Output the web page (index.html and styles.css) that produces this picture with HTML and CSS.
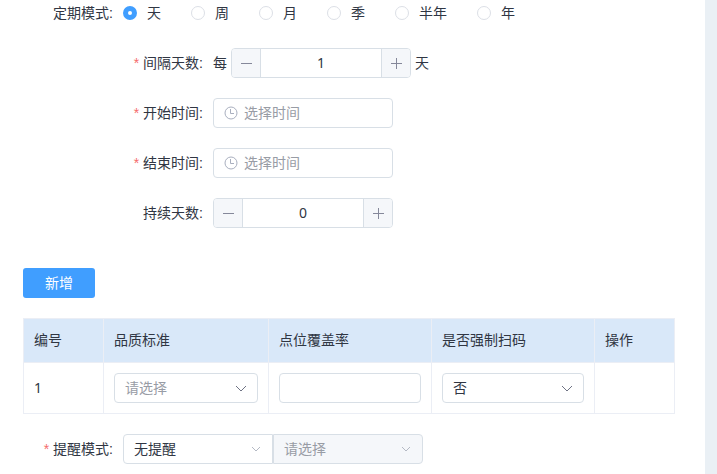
FILE: index.html
```html
<!DOCTYPE html>
<html lang="zh-CN">
<head>
<meta charset="utf-8">
<meta name="viewport" content="width=device-width, initial-scale=1">
<title>定期模式</title>
<link rel="stylesheet" href="styles.css">
</head>
<body>
<form class="panel">
  <div class="row row-mode" role="radiogroup" aria-labelledby="mode-label">
    <span class="label" id="mode-label">定期模式:</span>
    <div class="radios">
      <label class="radio"><input type="radio" name="mode" checked>天</label>
      <label class="radio"><input type="radio" name="mode">周</label>
      <label class="radio"><input type="radio" name="mode">月</label>
      <label class="radio"><input type="radio" name="mode">季</label>
      <label class="radio"><input type="radio" name="mode">半年</label>
      <label class="radio"><input type="radio" name="mode">年</label>
    </div>
  </div>
  <div class="row">
    <label class="label label-wide required" for="interval">间隔天数:</label>
    <div class="field">
      <span>每</span>
      <div class="stepper">
        <button type="button" aria-label="减少"><svg viewBox="0 0 12 12"><path d="M1 6.5H12"/></svg></button>
        <input id="interval" type="text" inputmode="numeric" value="1">
        <button type="button" aria-label="增加"><svg viewBox="0 0 12 12"><path d="M1 6.5H12M6.5 1V12"/></svg></button>
      </div>
      <span>天</span>
    </div>
  </div>
  <div class="row">
    <label class="label label-wide required" for="start">开始时间:</label>
    <div class="time">
      <svg class="clock" viewBox="0 0 14 14"><circle cx="7" cy="7" r="6"/><path d="M6.5 3V7.5H10"/></svg>
      <input id="start" class="control" type="text" placeholder="选择时间">
    </div>
  </div>
  <div class="row">
    <label class="label label-wide required" for="end">结束时间:</label>
    <div class="time">
      <svg class="clock" viewBox="0 0 14 14"><circle cx="7" cy="7" r="6"/><path d="M6.5 3V7.5H10"/></svg>
      <input id="end" class="control" type="text" placeholder="选择时间">
    </div>
  </div>
  <div class="row">
    <label class="label label-wide" for="duration">持续天数:</label>
    <div class="stepper">
      <button type="button" aria-label="减少"><svg viewBox="0 0 12 12"><path d="M1 6.5H12"/></svg></button>
      <input id="duration" type="text" inputmode="numeric" value="0">
      <button type="button" aria-label="增加"><svg viewBox="0 0 12 12"><path d="M1 6.5H12M6.5 1V12"/></svg></button>
    </div>
  </div>

  <button type="button" class="add">新增</button>

  <table class="grid">
    <colgroup><col class="col-small"><col class="col-standard"><col><col><col class="col-small"></colgroup>
    <thead>
      <tr><th>编号</th><th>品质标准</th><th>点位覆盖率</th><th>是否强制扫码</th><th>操作</th></tr>
    </thead>
    <tbody>
      <tr>
        <td>1</td>
        <td>
          <div class="select">
            <select class="control placeholder" aria-label="品质标准"><option>请选择</option></select>
            <svg class="chevron" viewBox="0 0 12 8"><path d="M1 1L6 6L11 1"/></svg>
          </div>
        </td>
        <td><input class="control" type="text" aria-label="点位覆盖率"></td>
        <td>
          <div class="select">
            <select class="control" aria-label="是否强制扫码"><option>否</option><option>是</option></select>
            <svg class="chevron" viewBox="0 0 12 8"><path d="M1 1L6 6L11 1"/></svg>
          </div>
        </td>
        <td></td>
      </tr>
    </tbody>
  </table>

  <div class="row">
    <label class="label required" for="remind">提醒模式:</label>
    <div class="pair">
      <div class="select light">
        <select id="remind" class="control"><option>无提醒</option></select>
        <svg class="chevron" viewBox="0 0 12 8"><path d="M2 1L6 5L10 1"/></svg>
      </div>
      <div class="select light">
        <select class="control placeholder" aria-label="提醒方式" disabled><option>请选择</option></select>
        <svg class="chevron" viewBox="0 0 12 8"><path d="M2 1L6 5L10 1"/></svg>
      </div>
    </div>
  </div>
</form>
</body>
</html>
```

FILE: styles.css
```css
* {
  box-sizing: border-box;
}

body {
  margin: 0;
  background: #eaf0f5;
  color: #303643;
  font: 14px/20px "Liberation Sans", "Noto Sans CJK SC", sans-serif;
}

input,
select,
button {
  margin: 0;
  font: inherit;
  color: inherit;
}

svg {
  fill: none;
  stroke: currentColor;
}

.panel {
  min-height: 100vh;
  margin-right: 12px;
  padding: 0 30px 10px 23px;
  background: #fff;
}

.row {
  display: flex;
  align-items: center;
  min-height: 30px;
  margin-bottom: 20px;
}

.row-mode {
  min-height: 26px;
  margin-bottom: 22px;
}

.row:last-child {
  margin-bottom: 0;
}

.label {
  flex: none;
  width: 100px;
  padding-right: 10px;
  text-align: right;
}

.label-wide {
  width: 190px;
}

.required::before {
  content: "*";
  margin-right: 4px;
  color: #f56c6c;
}

.radios {
  display: flex;
  gap: 30px;
}

.radio {
  display: flex;
  align-items: center;
  gap: 10px;
}

.radio input {
  appearance: none;
  width: 14px;
  height: 14px;
  border: 1px solid #dcdfe6;
  border-radius: 50%;
  background: #fff;
}

.radio input:checked {
  border: 5px solid #409eff;
}

.field {
  display: flex;
  align-items: center;
  gap: 4px;
}

.stepper {
  display: flex;
  width: 180px;
  height: 30px;
  overflow: hidden;
  border: 1px solid #d8dfe6;
  border-radius: 4px;
}

.stepper button {
  display: flex;
  flex: none;
  align-items: center;
  justify-content: center;
  width: 28px;
  padding: 0;
  border: 0;
  background: #f5f7fa;
  color: #85889a;
}

.stepper button svg {
  width: 12px;
  height: 12px;
}

.stepper input {
  flex: 1;
  min-width: 0;
  padding: 0;
  border: solid #d8dfe6;
  border-width: 0 1px;
  font-family: "Noto Sans", sans-serif;
  text-align: center;
}

.control {
  display: block;
  width: 100%;
  height: 30px;
  padding: 0 10px;
  border: 1px solid #d8dfe6;
  border-radius: 4px;
  background: #fff;
  appearance: none;
}

.control::placeholder,
.placeholder {
  color: #989ca5;
  opacity: 1;
}

.time {
  position: relative;
  width: 180px;
}

.time .control {
  padding-left: 30px;
}

.clock {
  position: absolute;
  top: 8px;
  left: 11px;
  width: 14px;
  height: 14px;
  color: #a9afbf;
}

.select {
  position: relative;
}

.chevron {
  position: absolute;
  top: 12px;
  right: 11px;
  width: 12px;
  height: 8px;
  color: #6f7384;
  pointer-events: none;
}

.light .chevron {
  color: #b4b9c4;
}

.add {
  display: block;
  width: 72px;
  height: 30px;
  margin: 40px 0 20px;
  padding: 0;
  border: 0;
  border-radius: 3px;
  background: #409eff;
  color: #fff;
}

.grid {
  width: 100%;
  margin-bottom: 20px;
  border: solid #ebeef5;
  border-width: 1px 0 0 1px;
  border-spacing: 0;
  table-layout: fixed;
}

.col-small {
  width: 80px;
}

.col-standard {
  width: 165px;
}

.grid th,
.grid td {
  padding: 10px;
  border: solid #ebeef5;
  border-width: 0 1px 1px 0;
  text-align: left;
}

.grid td {
  font-family: "Noto Sans", "Noto Sans CJK SC", sans-serif;
}

.grid th {
  height: 44px;
  padding-bottom: 12px;
  background: #d9e8f9;
  font-weight: 400;
}

.pair {
  display: flex;
}

.pair .select {
  width: 150px;
}

.pair .select:first-child .control {
  border-radius: 4px 0 0 4px;
}

.pair .select:last-child .control {
  border-radius: 0 4px 4px 0;
  background: #f5f7fa;
}
```
